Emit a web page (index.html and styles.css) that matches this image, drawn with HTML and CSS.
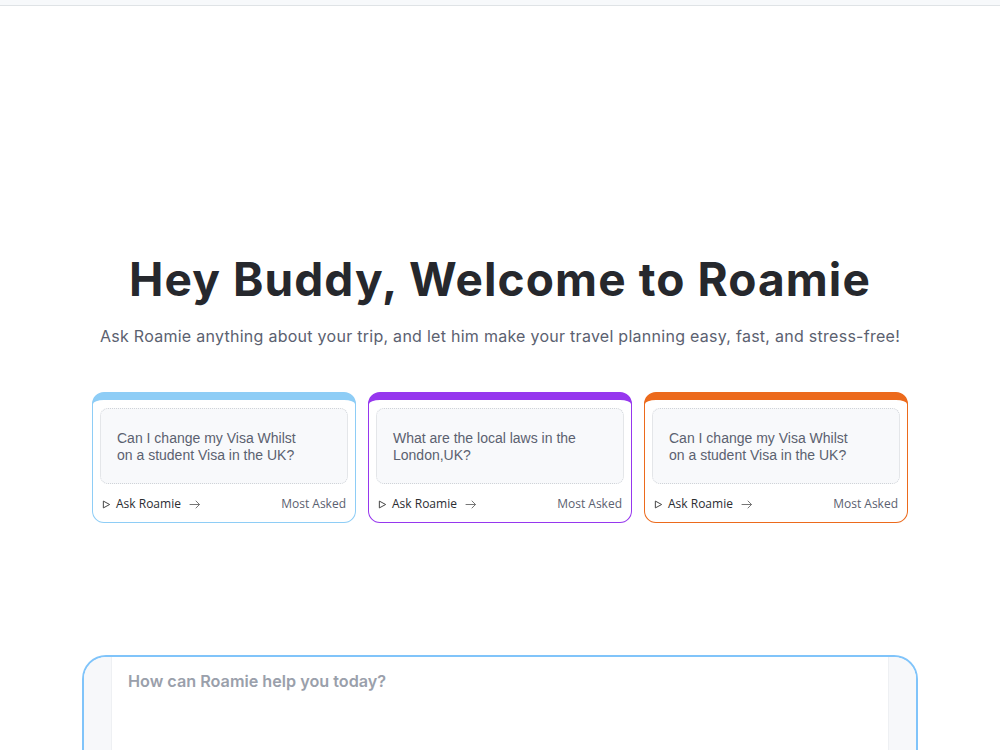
FILE: index.html
```html
<!DOCTYPE html>
<html lang="en">
<head>
<meta charset="utf-8">
<title>Roamie</title>
<link rel="stylesheet" href="styles.css">
</head>
<body>
<div class="topbar"></div>
<main class="main">
  <h1 class="title">Hey Buddy, Welcome to Roamie</h1>
  <p class="subtitle">Ask Roamie anything about your trip, and let him make your travel planning easy, fast, and stress-free!</p>
  <div class="cards">
    <div class="card card-blue">
      <div class="card-q">Can I change my Visa Whilst<br>on a student Visa in the UK?</div>
      <div class="card-foot">
        <span class="ask"><svg class="play" width="9" height="9" viewBox="0 0 10 10"><path d="M1.5 1.2 L8.5 5 L1.5 8.8 Z" fill="none" stroke="#444" stroke-width="1.1" stroke-linejoin="round"/></svg>Ask Roamie<svg class="arrow" width="12" height="9" viewBox="0 0 12 9"><path d="M1 4.5 H10.5 M7 1 L10.5 4.5 L7 8" fill="none" stroke="#777" stroke-width="1" stroke-linecap="round" stroke-linejoin="round"/></svg></span>
        <span class="most">Most Asked</span>
      </div>
    </div>
    <div class="card card-purple">
      <div class="card-q">What are the local laws in the<br>London,UK?</div>
      <div class="card-foot">
        <span class="ask"><svg class="play" width="9" height="9" viewBox="0 0 10 10"><path d="M1.5 1.2 L8.5 5 L1.5 8.8 Z" fill="none" stroke="#444" stroke-width="1.1" stroke-linejoin="round"/></svg>Ask Roamie<svg class="arrow" width="12" height="9" viewBox="0 0 12 9"><path d="M1 4.5 H10.5 M7 1 L10.5 4.5 L7 8" fill="none" stroke="#777" stroke-width="1" stroke-linecap="round" stroke-linejoin="round"/></svg></span>
        <span class="most">Most Asked</span>
      </div>
    </div>
    <div class="card card-orange">
      <div class="card-q">Can I change my Visa Whilst<br>on a student Visa in the UK?</div>
      <div class="card-foot">
        <span class="ask"><svg class="play" width="9" height="9" viewBox="0 0 10 10"><path d="M1.5 1.2 L8.5 5 L1.5 8.8 Z" fill="none" stroke="#444" stroke-width="1.1" stroke-linejoin="round"/></svg>Ask Roamie<svg class="arrow" width="12" height="9" viewBox="0 0 12 9"><path d="M1 4.5 H10.5 M7 1 L10.5 4.5 L7 8" fill="none" stroke="#777" stroke-width="1" stroke-linecap="round" stroke-linejoin="round"/></svg></span>
        <span class="most">Most Asked</span>
      </div>
    </div>
  </div>
  <div class="composer">
    <div class="side"></div>
    <div class="input">How can Roamie help you today?</div>
    <div class="side"></div>
  </div>
</main>
</body>
</html>
```
FILE: styles.css
```css
html, body {
  margin: 0;
  padding: 0;
  background: #ffffff;
  overflow: hidden;
}
body {
  font-family: "Liberation Sans", Arial, sans-serif;
  height: 750px;
}
.topbar {
  height: 5px;
  background: #f7f9fb;
  border-bottom: 1px solid #dfe3e6;
}
.main {
  display: flex;
  flex-direction: column;
  align-items: center;
  padding-top: 245px;
}
.title {
  margin: 0;
  font-family: Inter, "Noto Sans", sans-serif;
  font-weight: 700;
  font-size: 46px;
  line-height: 56px;
  color: #26282d;
  letter-spacing: 1.1px;
}
.subtitle {
  margin: 17px 0 0;
  font-family: Inter, "Noto Sans", sans-serif;
  font-size: 16px;
  line-height: 24px;
  color: #5b6170;
  letter-spacing: 0.27px;
}
.cards {
  display: flex;
  gap: 12px;
  margin-top: 44px;
}
.card {
  width: 264px;
  height: 131px;
  box-sizing: border-box;
  border: 1px solid;
  border-top-width: 8px;
  border-radius: 12px;
  padding: 8px 7px 0;
  display: flex;
  flex-direction: column;
}
.card-blue { border-color: #8ecdf6; }
.card-purple { border-color: #9637ee; }
.card-orange { border-color: #ec6a1c; }
.card-q {
  height: 76px;
  box-sizing: border-box;
  background: #f8f9fb;
  border: 1px dotted #cfd3d8;
  border-radius: 8px;
  padding: 21px 16px 0;
  font-size: 14px;
  line-height: 17px;
  color: #5b6170;
}
.card-foot {
  display: flex;
  justify-content: space-between;
  align-items: center;
  margin-top: 12px;
  padding: 0 2px;
  font-family: "Open Sans", "Noto Sans", sans-serif;
  font-size: 12px;
  line-height: 16px;
}
.ask {
  display: flex;
  align-items: center;
  color: #2b2d31;
}
.play { margin-right: 5px; }
.arrow { margin-left: 8px; }
.most { color: #5b6170; }
.composer {
  margin-top: 132px;
  width: 836px;
  height: 110px;
  box-sizing: border-box;
  border: 2px solid #80c4fa;
  border-bottom: none;
  border-radius: 24px 24px 0 0;
  display: flex;
  overflow: hidden;
}
.side {
  width: 27px;
  background: #f7f8fa;
}
.side:first-child { border-right: 1px solid #eef0f3; }
.side:last-child { border-left: 1px solid #eef0f3; }
.input {
  flex: 1;
  padding: 13px 16px;
  font-family: Inter, "Noto Sans", sans-serif;
  font-weight: 600;
  font-size: 16.2px;
  line-height: 22px;
  color: #9aa0ab;
}
```
